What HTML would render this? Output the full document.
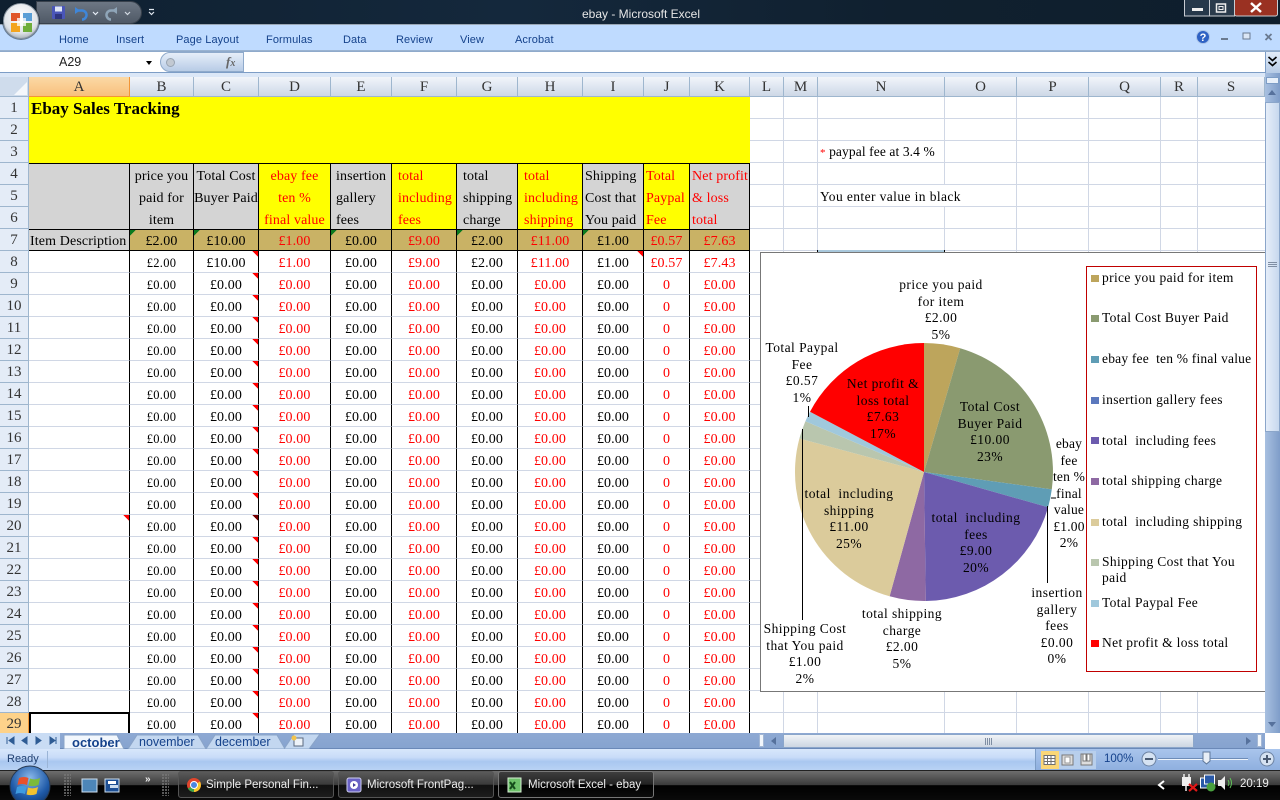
<!DOCTYPE html>
<html><head><meta charset="utf-8"><title>ebay - Microsoft Excel</title>
<style>
html,body{margin:0;padding:0;width:1280px;height:800px;overflow:hidden;background:#fff}
body{position:relative;font-family:"Liberation Serif",serif;color:#000}
.a{position:absolute}
.s{font-family:"Liberation Sans",sans-serif}
.tab{position:absolute;top:34px;font:11px "Liberation Sans",sans-serif;color:#15428b;letter-spacing:.1px;white-space:nowrap}
.ch{position:absolute;top:77px;height:19px;line-height:21px;text-align:center;font-size:15px;color:#333;background:linear-gradient(#f2f5fa,#dde5f0 55%,#ced8e6);border-right:1px solid #9eb6ce;border-bottom:1px solid #9eb6ce;box-sizing:content-box}
.rh{position:absolute;left:0;width:28px;height:21px;line-height:23px;text-align:center;font-size:15px;color:#333;background:#e4ecf7;border-right:1px solid #9eb6ce;border-bottom:1px solid #9eb6ce}
#g{position:absolute;left:29px;top:97px;width:721px;height:636px;overflow:hidden}
table{border-collapse:separate;border-spacing:0;table-layout:fixed;width:721px;font-size:14px;letter-spacing:.12px}
td{height:22px;box-sizing:border-box;padding:4px 0 0;text-align:center;border-right:1px solid #000;border-bottom:1px solid #d0d7e5;white-space:nowrap;overflow:visible;line-height:17px;background-color:#fff}
tr.y td{background:#ff0;border:0;padding:0}
td.l{text-align:left}
td.gy{background:#d4d4d4;border-bottom:0}
td.yl{background:#ff0;border-bottom:0;color:#f00}
td.r{color:#f00}
tr.top td{border-top:1px solid #000}
tr.s7 td{background:#c9b265;border-bottom:1px solid #000;border-top:1px solid #000;line-height:17px;padding-top:3px}
td.b{font-size:12.5px;letter-spacing:.3px}
td.t{background-image:linear-gradient(225deg,#f00 4px,transparent 4px)}
td.tk{background-image:linear-gradient(225deg,#700 4px,transparent 4px)}
tr.s7 td.gt{background-image:linear-gradient(135deg,#0a7a1f 4px,transparent 4px)}
.gv{position:absolute;top:97px;width:1px;height:636px;background:#d0d7e5}
.lb{position:absolute;text-align:center;font-size:13.5px;line-height:16.5px;letter-spacing:.45px;white-space:nowrap;transform:translateX(-50%)}
.lg{position:absolute;left:1102px;font-size:13.5px;line-height:16px;letter-spacing:.35px;white-space:nowrap}
.sq{position:absolute;left:1091px;width:8px;height:7px}
.tb{position:absolute;top:771px;height:27px;border:1px solid #555;border-radius:3px;box-sizing:border-box;background:linear-gradient(#5a5a5a,#3a3a3a 50%,#111 52%,#1c1c1c);color:#eee;font:11.5px/27px "Liberation Sans",sans-serif;white-space:nowrap;overflow:hidden}
.sh{position:absolute;top:735px;font:12.5px "Liberation Sans",sans-serif;color:#15428b;white-space:nowrap}
.dots{position:absolute;top:774px;width:7px;height:22px;background:radial-gradient(circle at 1px 1px,#777 1px,transparent 1px) 0 0/3px 3px}
</style></head><body>

<!-- Title bar -->
<div class="a" style="left:0;top:0;width:1280px;height:25px;background:linear-gradient(90deg,#0f2030,#14283c 40%,#10202f 70%,#0e1e2c);border-bottom:1px solid #9aa7b5;box-sizing:border-box"></div>
<div class="a" style="left:36px;top:1px;width:106px;height:23px;border-radius:0 12px 12px 0;background:linear-gradient(#6d7784,#4f5966);border:1px solid #38414c;box-sizing:border-box"></div>
<div class="a s" style="left:541px;width:200px;top:7px;text-align:center;font-size:12px;color:#e6e6e6;white-space:nowrap">ebay - Microsoft Excel</div>
<svg class="a" style="left:1184px;top:0" width="96" height="17" viewBox="0 0 96 17">
<rect x=".5" y="-2" width="25" height="18" fill="#26384a" stroke="#c8ccd2"/><rect x="25.500" y="-2" width="25" height="18" fill="#2a3b4c" stroke="#c8ccd2"/><rect x="50.500" y="-2" width="43" height="18" rx="2" fill="#9a3122" stroke="#c8ccd2"/>
<rect x="8" y="8" width="11" height="3" fill="#eee"/><rect x="32.500" y="4" width="9" height="8" fill="none" stroke="#eee" stroke-width="1.500"/><rect x="35" y="6.500" width="4" height="3" fill="none" stroke="#eee"/>
<path d="M67 3l10 9M77 3l-10 9" stroke="#fff" stroke-width="2.500"/>
</svg>

<!-- Ribbon -->
<div class="a" style="left:0;top:25px;width:1280px;height:26px;background:#bfdbff;border-bottom:1px solid #9ab3d1;box-sizing:border-box"></div>
<div class="tab" style="left:59px">Home</div><div class="tab" style="left:116px">Insert</div><div class="tab" style="left:176px">Page Layout</div><div class="tab" style="left:266px">Formulas</div><div class="tab" style="left:343px">Data</div><div class="tab" style="left:396px">Review</div><div class="tab" style="left:460px">View</div><div class="tab" style="left:515px">Acrobat</div>
<svg class="a" style="left:1190px;top:28px" width="90" height="20" viewBox="0 0 90 20">
<circle cx="13" cy="9" r="6.500" fill="#2f62c4" stroke="#a9c3e8"/><text x="13" y="13" text-anchor="middle" font-family="Liberation Sans" font-size="11" font-weight="bold" fill="#fff">?</text>
<rect x="31" y="10" width="7" height="2" fill="#6a7a90"/>
<rect x="53" y="5" width="7" height="6" fill="#dbe6f5" stroke="#6a7a90"/>
<path d="M75.500 6l6 6M81.500 6l-6 6" stroke="#6a7a90" stroke-width="1.800"/>
</svg>

<!-- Formula bar -->
<div class="a" style="left:0;top:51px;width:1280px;height:26px;background:#dbe7f7;border-top:1px solid #8faacb;box-sizing:border-box"></div>
<div class="a" style="left:0;top:52px;width:1265px;height:20px;background:#fff;border-bottom:1px solid #7d9dc6"></div>
<div class="a s" style="left:59px;top:55px;font-size:12.500px;color:#222">A29</div>
<div class="a" style="left:146px;top:61px;width:0;height:0;border:3.500px solid transparent;border-top:4px solid #000"></div>
<div class="a" style="left:160px;top:52px;width:84px;height:20px;border-radius:10px 0 0 10px;background:linear-gradient(#e6eef9,#b8cce6);border:1px solid #8faacb;box-sizing:border-box"></div>
<div class="a" style="left:166px;top:58px;width:7px;height:7px;border-radius:50%;background:#c2c9d2;border:1px solid #98a4b2"></div>
<div class="a" style="left:226px;top:54px;font:italic bold 13px 'Liberation Serif',serif;color:#666">f<span style="font-size:10px">x</span></div>
<div class="a" style="left:1265px;top:52px;width:15px;height:21px;background:linear-gradient(#e3edf9,#b6cbe6);border-left:1px solid #7d9dc6;box-sizing:border-box"></div>
<svg class="a" style="left:1267px;top:56px" width="11" height="12" viewBox="0 0 11 12"><path d="M1.500 1l4 3.500 4-3.500M1.500 6l4 3.500 4-3.500" fill="none" stroke="#000" stroke-width="1.600"/></svg>

<!-- Office orb + quick access icons -->
<svg class="a" style="left:0;top:0" width="160" height="46" viewBox="0 0 160 46">
<defs><radialGradient id="o" cx=".5" cy=".35" r=".7"><stop offset="0" stop-color="#fff"/><stop offset=".7" stop-color="#dfe3e8"/><stop offset="1" stop-color="#9aa4ae"/></radialGradient></defs>
<circle cx="21" cy="21" r="19" fill="#0c1a28" opacity=".5"/>
<circle cx="21" cy="21" r="17.500" fill="url(#o)" stroke="#8894a0"/>
<path d="M11 13h9v8h-9z" fill="#e0562a"/><path d="M23 13h9v8h-9z" fill="#3f8fd0" opacity=".85"/><path d="M11 23h9v9h-9z" fill="#f3a41f"/><path d="M23 23h9v9h-9z" fill="#6fae3a"/><path d="M17 18h9v8h-9z" fill="#fff" opacity=".75"/>
<rect x="52" y="6" width="13" height="13" rx="1" fill="#4a56b8"/><rect x="55" y="6.500" width="7" height="5" fill="#dfe6f5"/><rect x="55" y="14" width="7" height="5" fill="#2e357e"/>
<path d="M76 10.500h6a4.500 4.500 0 0 1 0 9" fill="none" stroke="#3f86d8" stroke-width="2.500"/><path d="M75 7v7l5-3.500z" fill="#3f86d8"/>
<path d="M93 12l2.500 2.500 2.500-2.500" fill="none" stroke="#e6edf6" stroke-width="1.200"/>
<path d="M116 10.500h-5a4.500 4.500 0 0 0 0 9" fill="none" stroke="#8fa5b8" stroke-width="2.500"/><path d="M117 7v7l-5-3.500z" fill="#8fa5b8"/>
<path d="M125 12l2.500 2.500 2.500-2.500" fill="none" stroke="#d4dbe3" stroke-width="1.200"/>
<path d="M149 9.500h5M149 12l2.500 2.500 2.500-2.500" fill="none" stroke="#dfe6ef" stroke-width="1.200"/>
</svg>

<!-- Corner + column headers -->
<div class="a" style="left:0;top:77px;width:28px;height:19px;background:#cfdcec;border-right:1px solid #9eb6ce;border-bottom:1px solid #9eb6ce"></div>
<div class="a" style="left:14px;top:82px;width:0;height:0;border-left:13px solid transparent;border-bottom:13px solid #f4f7fb"></div>
<div class="ch" style="left:29px;width:100px;background:linear-gradient(#fbd9a5,#f8c07d);border-color:#f29536">A</div>
<div class="ch" style="left:130px;width:63px">B</div><div class="ch" style="left:194px;width:64px">C</div><div class="ch" style="left:259px;width:71px">D</div><div class="ch" style="left:331px;width:60px">E</div><div class="ch" style="left:392px;width:64px">F</div><div class="ch" style="left:457px;width:60px">G</div><div class="ch" style="left:518px;width:64px">H</div><div class="ch" style="left:583px;width:60px">I</div><div class="ch" style="left:644px;width:45px">J</div><div class="ch" style="left:690px;width:59px">K</div><div class="ch" style="left:750px;width:33px">L</div><div class="ch" style="left:784px;width:33px">M</div><div class="ch" style="left:818px;width:126px">N</div><div class="ch" style="left:945px;width:71px">O</div><div class="ch" style="left:1017px;width:71px">P</div><div class="ch" style="left:1089px;width:71px">Q</div><div class="ch" style="left:1161px;width:36px">R</div><div class="ch" style="left:1198px;width:66px">S</div>

<!-- Row headers -->
<div class="rh" style="top:97px">1</div><div class="rh" style="top:119px">2</div><div class="rh" style="top:141px">3</div><div class="rh" style="top:163px">4</div><div class="rh" style="top:185px">5</div><div class="rh" style="top:207px">6</div><div class="rh" style="top:229px">7</div><div class="rh" style="top:251px">8</div><div class="rh" style="top:273px">9</div><div class="rh" style="top:295px">10</div><div class="rh" style="top:317px">11</div><div class="rh" style="top:339px">12</div><div class="rh" style="top:361px">13</div><div class="rh" style="top:383px">14</div><div class="rh" style="top:405px">15</div><div class="rh" style="top:427px">16</div><div class="rh" style="top:449px">17</div><div class="rh" style="top:471px">18</div><div class="rh" style="top:493px">19</div><div class="rh" style="top:515px">20</div><div class="rh" style="top:537px">21</div><div class="rh" style="top:559px">22</div><div class="rh" style="top:581px">23</div><div class="rh" style="top:603px">24</div><div class="rh" style="top:625px">25</div><div class="rh" style="top:647px">26</div><div class="rh" style="top:669px">27</div><div class="rh" style="top:691px">28</div><div class="rh" style="top:713px;height:20px;background:#fdd28a;border-color:#f29536">29</div>

<!-- Right-side grid -->
<div class="a" style="left:750px;top:97px;width:515px;height:636px;background:repeating-linear-gradient(#fff 0,#fff 21px,#d0d7e5 21px,#d0d7e5 22px)"></div>
<div class="gv" style="left:783px"></div><div class="gv" style="left:817px"></div><div class="gv" style="left:944px"></div><div class="gv" style="left:1016px"></div><div class="gv" style="left:1088px"></div><div class="gv" style="left:1160px"></div><div class="gv" style="left:1197px"></div>
<div class="a" style="left:818px;top:185px;width:130px;height:21px;background:#fff;border-bottom:1px solid #d0d7e5"></div>
<div class="a" style="left:820px;top:144px;font-size:13.500px;letter-spacing:.1px;white-space:nowrap"><span style="color:#f00;font-size:11px">*</span> paypal fee at 3.4 %</div>
<div class="a" style="left:820px;top:189px;font-size:13.500px;letter-spacing:.4px;white-space:nowrap">You enter value in black</div>

<!-- Sheet -->
<div id="g"><table>
<colgroup><col style="width:101px"><col style="width:64px"><col style="width:65px"><col style="width:72px"><col style="width:61px"><col style="width:65px"><col style="width:61px"><col style="width:65px"><col style="width:61px"><col style="width:46px"><col style="width:60px"></colgroup>
<tr class="y"><td colspan="11" class="l" style="font-weight:bold;font-size:17px;letter-spacing:0;padding:1px 0 0 2px;line-height:21px">Ebay Sales Tracking</td></tr>
<tr class="y"><td colspan="11"></td></tr>
<tr class="y"><td colspan="11"></td></tr>
<tr class="top"><td class="gy"></td><td class="gy">price you</td><td class="gy">Total Cost</td><td class="yl">ebay fee</td><td class="gy l" style="padding-left:5px">insertion</td><td class="yl l" style="padding-left:6px">total</td><td class="gy l" style="padding-left:6px">total</td><td class="yl l" style="padding-left:6px">total</td><td class="gy l" style="padding-left:2px">Shipping</td><td class="yl l" style="padding-left:2px">Total</td><td class="gy l r" style="padding-left:2px">Net profit</td></tr>
<tr><td class="gy"></td><td class="gy">paid for</td><td class="gy">Buyer Paid</td><td class="yl">ten %</td><td class="gy l" style="padding-left:5px">gallery</td><td class="yl l" style="padding-left:6px">including</td><td class="gy l" style="padding-left:6px">shipping</td><td class="yl l" style="padding-left:6px">including</td><td class="gy l" style="padding-left:2px">Cost that</td><td class="yl l" style="padding-left:2px">Paypal</td><td class="gy l r" style="padding-left:2px">&amp; loss</td></tr>
<tr><td class="gy"></td><td class="gy">item</td><td class="gy"></td><td class="yl">final value</td><td class="gy l" style="padding-left:5px">fees</td><td class="yl l" style="padding-left:6px">fees</td><td class="gy l" style="padding-left:6px">charge</td><td class="yl l" style="padding-left:6px">shipping</td><td class="gy l" style="padding-left:2px">You paid</td><td class="yl l" style="padding-left:2px">Fee</td><td class="gy l r" style="padding-left:2px">total</td></tr>
<tr class="s7"><td class="l" style="background:#d4d4d4;padding-left:1px;letter-spacing:.12px">Item Description</td><td class="gt">£2.00</td><td class="gt">£10.00</td><td class="r">£1.00</td><td class="gt">£0.00</td><td class="r">£9.00</td><td class="gt">£2.00</td><td class="r">£11.00</td><td class="gt">£1.00</td><td class="r">£0.57</td><td class="r">£7.63</td></tr>
<tr><td></td><td class="b">£2.00</td><td class="t">£10.00</td><td class="r">£1.00</td><td>£0.00</td><td class="r">£9.00</td><td>£2.00</td><td class="r">£11.00</td><td class="t">£1.00</td><td class="r">£0.57</td><td class="r">£7.43</td></tr>
<tr><td></td><td class="b">£0.00</td><td class="t">£0.00</td><td class="r">£0.00</td><td>£0.00</td><td class="r">£0.00</td><td>£0.00</td><td class="r">£0.00</td><td>£0.00</td><td class="r">0</td><td class="r">£0.00</td></tr>
<tr><td></td><td class="b">£0.00</td><td class="t">£0.00</td><td class="r">£0.00</td><td>£0.00</td><td class="r">£0.00</td><td>£0.00</td><td class="r">£0.00</td><td>£0.00</td><td class="r">0</td><td class="r">£0.00</td></tr>
<tr><td></td><td class="b">£0.00</td><td class="t">£0.00</td><td class="r">£0.00</td><td>£0.00</td><td class="r">£0.00</td><td>£0.00</td><td class="r">£0.00</td><td>£0.00</td><td class="r">0</td><td class="r">£0.00</td></tr>
<tr><td></td><td class="b">£0.00</td><td class="t">£0.00</td><td class="r">£0.00</td><td>£0.00</td><td class="r">£0.00</td><td>£0.00</td><td class="r">£0.00</td><td>£0.00</td><td class="r">0</td><td class="r">£0.00</td></tr>
<tr><td></td><td class="b">£0.00</td><td class="t">£0.00</td><td class="r">£0.00</td><td>£0.00</td><td class="r">£0.00</td><td>£0.00</td><td class="r">£0.00</td><td>£0.00</td><td class="r">0</td><td class="r">£0.00</td></tr>
<tr><td></td><td class="b">£0.00</td><td class="t">£0.00</td><td class="r">£0.00</td><td>£0.00</td><td class="r">£0.00</td><td>£0.00</td><td class="r">£0.00</td><td>£0.00</td><td class="r">0</td><td class="r">£0.00</td></tr>
<tr><td></td><td class="b">£0.00</td><td class="t">£0.00</td><td class="r">£0.00</td><td>£0.00</td><td class="r">£0.00</td><td>£0.00</td><td class="r">£0.00</td><td>£0.00</td><td class="r">0</td><td class="r">£0.00</td></tr>
<tr><td></td><td class="b">£0.00</td><td class="t">£0.00</td><td class="r">£0.00</td><td>£0.00</td><td class="r">£0.00</td><td>£0.00</td><td class="r">£0.00</td><td>£0.00</td><td class="r">0</td><td class="r">£0.00</td></tr>
<tr><td></td><td class="b">£0.00</td><td class="t">£0.00</td><td class="r">£0.00</td><td>£0.00</td><td class="r">£0.00</td><td>£0.00</td><td class="r">£0.00</td><td>£0.00</td><td class="r">0</td><td class="r">£0.00</td></tr>
<tr><td></td><td class="b">£0.00</td><td class="t">£0.00</td><td class="r">£0.00</td><td>£0.00</td><td class="r">£0.00</td><td>£0.00</td><td class="r">£0.00</td><td>£0.00</td><td class="r">0</td><td class="r">£0.00</td></tr>
<tr><td></td><td class="b">£0.00</td><td class="t">£0.00</td><td class="r">£0.00</td><td>£0.00</td><td class="r">£0.00</td><td>£0.00</td><td class="r">£0.00</td><td>£0.00</td><td class="r">0</td><td class="r">£0.00</td></tr>
<tr><td class="t"></td><td class="b">£0.00</td><td class="tk">£0.00</td><td class="r">£0.00</td><td>£0.00</td><td class="r">£0.00</td><td>£0.00</td><td class="r">£0.00</td><td>£0.00</td><td class="r">0</td><td class="r">£0.00</td></tr>
<tr><td></td><td class="b">£0.00</td><td class="t">£0.00</td><td class="r">£0.00</td><td>£0.00</td><td class="r">£0.00</td><td>£0.00</td><td class="r">£0.00</td><td>£0.00</td><td class="r">0</td><td class="r">£0.00</td></tr>
<tr><td></td><td class="b">£0.00</td><td class="t">£0.00</td><td class="r">£0.00</td><td>£0.00</td><td class="r">£0.00</td><td>£0.00</td><td class="r">£0.00</td><td>£0.00</td><td class="r">0</td><td class="r">£0.00</td></tr>
<tr><td></td><td class="b">£0.00</td><td class="t">£0.00</td><td class="r">£0.00</td><td>£0.00</td><td class="r">£0.00</td><td>£0.00</td><td class="r">£0.00</td><td>£0.00</td><td class="r">0</td><td class="r">£0.00</td></tr>
<tr><td></td><td class="b">£0.00</td><td class="t">£0.00</td><td class="r">£0.00</td><td>£0.00</td><td class="r">£0.00</td><td>£0.00</td><td class="r">£0.00</td><td>£0.00</td><td class="r">0</td><td class="r">£0.00</td></tr>
<tr><td></td><td class="b">£0.00</td><td class="t">£0.00</td><td class="r">£0.00</td><td>£0.00</td><td class="r">£0.00</td><td>£0.00</td><td class="r">£0.00</td><td>£0.00</td><td class="r">0</td><td class="r">£0.00</td></tr>
<tr><td></td><td class="b">£0.00</td><td class="t">£0.00</td><td class="r">£0.00</td><td>£0.00</td><td class="r">£0.00</td><td>£0.00</td><td class="r">£0.00</td><td>£0.00</td><td class="r">0</td><td class="r">£0.00</td></tr>
<tr><td></td><td class="b">£0.00</td><td class="t">£0.00</td><td class="r">£0.00</td><td>£0.00</td><td class="r">£0.00</td><td>£0.00</td><td class="r">£0.00</td><td>£0.00</td><td class="r">0</td><td class="r">£0.00</td></tr>
<tr><td></td><td class="b">£0.00</td><td class="t">£0.00</td><td class="r">£0.00</td><td>£0.00</td><td class="r">£0.00</td><td>£0.00</td><td class="r">£0.00</td><td>£0.00</td><td class="r">0</td><td class="r">£0.00</td></tr>
<tr><td></td><td class="b">£0.00</td><td class="t">£0.00</td><td class="r">£0.00</td><td>£0.00</td><td class="r">£0.00</td><td>£0.00</td><td class="r">£0.00</td><td>£0.00</td><td class="r">0</td><td class="r">£0.00</td></tr>
</table></div>
<div class="a" style="left:29px;top:712px;width:101px;height:21px;border:2px solid #000;border-bottom:0;box-sizing:border-box"></div>

<!-- Chart -->
<div class="a" style="left:760px;top:252px;width:505px;height:440px;background:#fff;border:1px solid #777;border-right:0;box-sizing:border-box"></div>
<div class="a" style="left:818px;top:250px;width:127px;height:2px;background:#a9c8dc"></div>
<div class="a" style="left:817px;top:250px;width:1px;height:2px;background:#000"></div>
<div class="a" style="left:944px;top:250px;width:1px;height:2px;background:#000"></div>
<svg class="a" style="left:760px;top:252px" width="505" height="440" viewBox="760 252 505 440">
<path d="M924 472L924 343A129 129 0 0 1 960.200 348.200Z" fill="#bda55c"/>
<path d="M924 472L960.200 348.200A129 129 0 0 1 1051.800 489.400Z" fill="#8a9a70"/>
<path d="M924 472L1051.800 489.400A129 129 0 0 1 1048.100 507.300Z" fill="#5f9db5"/>
<path d="M924 472L1048.100 507.300A129 129 0 0 1 925.800 601Z" fill="#6c5bae"/>
<path d="M924 472L925.800 601A129 129 0 0 1 889.600 596.300Z" fill="#8e69a3"/>
<path d="M924 472L889.600 596.300A129 129 0 0 1 799.400 438.500Z" fill="#dbcb9b"/>
<path d="M924 472L799.400 438.500A129 129 0 0 1 805.400 421.200Z" fill="#b9c6ae"/>
<path d="M924 472L805.400 421.200A129 129 0 0 1 810 411.700Z" fill="#a0c8dc"/>
<path d="M924 472L810 411.700A129 129 0 0 1 924 343Z" fill="#f00"/>
<path d="M802.500 429V620M808.500 406V417M1047.500 506V583M1051 498h5" stroke="#000" fill="none"/>
</svg>
<div class="lb" style="left:941px;top:277px">price you paid<br>for item<br>£2.00<br>5%</div>
<div class="lb" style="left:802px;top:340px">Total Paypal<br>Fee<br>£0.57<br>1%</div>
<div class="lb" style="left:883px;top:376px">Net profit &amp;<br>loss total<br>£7.63<br>17%</div>
<div class="lb" style="left:990px;top:399px">Total Cost<br>Buyer Paid<br>£10.00<br>23%</div>
<div class="lb" style="left:1069px;top:436px;letter-spacing:.2px">ebay<br>fee<br>ten %<br>final<br>value<br>£1.00<br>2%</div>
<div class="lb" style="left:849px;top:486px">total&nbsp; including<br>shipping<br>£11.00<br>25%</div>
<div class="lb" style="left:976px;top:510px">total&nbsp; including<br>fees<br>£9.00<br>20%</div>
<div class="lb" style="left:805px;top:621px">Shipping Cost<br>that You paid<br>£1.00<br>2%</div>
<div class="lb" style="left:902px;top:606px">total shipping<br>charge<br>£2.00<br>5%</div>
<div class="lb" style="left:1057px;top:585px">insertion<br>gallery<br>fees<br>£0.00<br>0%</div>

<div class="a" style="left:1086px;top:266px;width:171px;height:406px;border:1px solid #c00000;box-sizing:border-box"></div>
<div class="sq" style="top:275px;background:#bda55c"></div><div class="lg" style="top:270px">price you paid for item</div>
<div class="sq" style="top:315px;background:#8a9a70"></div><div class="lg" style="top:310px">Total Cost Buyer Paid</div>
<div class="sq" style="top:356px;background:#5f9db5"></div><div class="lg" style="top:351px;letter-spacing:.2px">ebay fee&nbsp; ten % final value</div>
<div class="sq" style="top:397px;background:#5b78bd"></div><div class="lg" style="top:392px">insertion gallery fees</div>
<div class="sq" style="top:437px;background:#6c5bae"></div><div class="lg" style="top:433px">total&nbsp; including fees</div>
<div class="sq" style="top:478px;background:#8e69a3"></div><div class="lg" style="top:473px">total shipping charge</div>
<div class="sq" style="top:519px;background:#dbcb9b"></div><div class="lg" style="top:514px">total&nbsp; including shipping</div>
<div class="sq" style="top:559px;background:#b9c6ae"></div><div class="lg" style="top:554px">Shipping Cost that You<br>paid</div>
<div class="sq" style="top:600px;background:#a0c8dc"></div><div class="lg" style="top:595px">Total Paypal Fee</div>
<div class="sq" style="top:640px;background:#f00"></div><div class="lg" style="top:635px">Net profit &amp; loss total</div>

<!-- V scrollbar -->
<div class="a" style="left:1265px;top:73px;width:15px;height:660px;background:linear-gradient(90deg,#a8c0e0,#7f9dc9)"></div>
<div class="a" style="left:1266px;top:77px;width:13px;height:7px;background:#e8f0fa;border:1px solid #7d9dc6;box-sizing:border-box"></div>
<div class="a" style="left:1268px;top:90px;width:0;height:0;border:4.500px solid transparent;border-top:0;border-bottom:5px solid #56719c"></div>
<div class="a" style="left:1265px;top:102px;width:15px;height:330px;background:linear-gradient(90deg,#e6eef9,#c7d8ee);border:1px solid #8ba6ca;box-sizing:border-box"></div>
<div class="a" style="left:1268px;top:262px;width:9px;height:6px;background:repeating-linear-gradient(#7f8ea3 0,#7f8ea3 1px,transparent 1px,transparent 2px)"></div>
<div class="a" style="left:1268px;top:722px;width:0;height:0;border:4.500px solid transparent;border-bottom:0;border-top:5px solid #56719c"></div>

<!-- Sheet tabs bar -->
<div class="a" style="left:0;top:733px;width:1265px;height:16px;background:linear-gradient(#8ea9d3,#86a3cf);border-bottom:1px solid #6b89b8;box-sizing:border-box"></div>
<div class="a" style="left:0;top:733px;width:60px;height:16px;background:#c9dcf4"></div>
<svg class="a" style="left:0;top:733px" width="330" height="16" viewBox="0 0 330 16">
<path d="M7 4v7M14 4l-5 3.500 5 3.500zM27 4l-5 3.500 5 3.500zM36 4l5 3.500-5 3.500zM50 4l5 3.500-5 3.500zM56 4v7" fill="#2f5c94" stroke="#2f5c94"/>
<path d="M64 16V2h53l7 14z" fill="#f2f7fd" stroke="#8aa4c8"/>
<path d="M128 16l9-14h61l8 14z" fill="#c3d7f0" stroke="#8aa4c8"/>
<path d="M206 16l9-14h62l8 14z" fill="#c3d7f0" stroke="#8aa4c8"/>
<path d="M284 16l10-15h26l-11 15z" fill="#c3d7f0" stroke="#8aa4c8"/>
<rect x="294" y="5" width="9" height="8" fill="#eef3f9" stroke="#5b6a80"/><circle cx="294" cy="5" r="2.500" fill="#f3c44c"/>
</svg>
<div class="sh" style="left:72px;font-weight:bold;font-size:13px">october</div><div class="sh" style="left:139px">november</div><div class="sh" style="left:215px">december</div>
<div class="a" style="left:759px;top:734px;width:5px;height:13px;background:#f2f6fb;border:1px solid #a3b7d4;box-sizing:border-box"></div>
<div class="a" style="left:771px;top:737px;width:0;height:0;border:4.500px solid transparent;border-left:0;border-right:5px solid #56719c"></div>
<div class="a" style="left:783px;top:734px;width:411px;height:14px;background:linear-gradient(#f0f3f7,#cdd6e2);border:1px solid #8ba6ca;box-sizing:border-box"></div>
<div class="a" style="left:985px;top:738px;width:7px;height:7px;background:repeating-linear-gradient(90deg,#7f8ea3 0,#7f8ea3 1px,transparent 1px,transparent 2px)"></div>
<div class="a" style="left:1246px;top:737px;width:0;height:0;border:4.500px solid transparent;border-right:0;border-left:5px solid #56719c"></div>
<div class="a" style="left:1257px;top:734px;width:5px;height:13px;background:#f2f6fb;border:1px solid #a3b7d4;box-sizing:border-box"></div>

<!-- Status bar -->
<div class="a" style="left:0;top:749px;width:1280px;height:21px;background:linear-gradient(#d8e7fb,#c8dcf8 40%,#a9c7f0 60%,#b9d2f4)"></div>
<div class="a s" style="left:7px;top:753px;font-size:11px;color:#1f3f70">Ready</div>
<div class="a" style="left:47px;top:751px;width:1px;height:17px;background:#9ab4d6"></div>
<div class="a" style="left:1035px;top:749px;width:245px;height:21px;background:linear-gradient(#a9c5ec,#8fb0df);border-left:1px solid #7d9dc6;box-sizing:border-box"></div>
<svg class="a" style="left:1040px;top:750px" width="240" height="20" viewBox="0 0 240 20">
<rect x="1" y="1" width="18" height="18" fill="#fbd777"/><rect x="19" y="1" width="19" height="18" fill="#b8cfec"/><rect x="38" y="1" width="18" height="18" fill="#b8cfec"/>
<path d="M4 5.500h11v9H4zM4 8.500h11M4 11.500h11M7.500 5.500v9M11 5.500v9" fill="#fff" stroke="#6f6f6f"/>
<rect x="22" y="5" width="11" height="10" fill="#ddd" stroke="#777"/><rect x="25" y="7" width="5" height="6" fill="#fff" stroke="#999"/>
<rect x="41" y="4" width="11" height="11" fill="#ddd" stroke="#777"/><rect x="43" y="4" width="3" height="7" fill="#fff" stroke="#777"/><rect x="47" y="4" width="3" height="7" fill="#fff" stroke="#777"/>
<circle cx="109" cy="9" r="7" fill="#d5e2f2" stroke="#6d83a3"/><path d="M105 9h8" stroke="#4a5a72" stroke-width="2"/>
<path d="M118 9.500h90" stroke="#eef4fb" stroke-width="1"/><path d="M118 8.500h90" stroke="#6d8cb8" stroke-width="1"/>
<path d="M163 2h7v9l-3.500 3-3.500-3z" fill="#e8eef6" stroke="#5f7899"/>
<circle cx="227" cy="9" r="7" fill="#d5e2f2" stroke="#6d83a3"/><path d="M223 9h8M227 5v8" stroke="#4a5a72" stroke-width="2"/>
</svg>
<div class="a s" style="left:1104px;top:753px;font-size:11.500px;color:#15428b">100%</div>

<!-- Taskbar -->
<div class="a" style="left:0;top:770px;width:1280px;height:30px;background:linear-gradient(#6e6e6e,#3a3a3a 48%,#000 50%,#0a0a0a);border-top:1px solid #222;box-sizing:border-box"></div>
<div class="dots" style="left:64px"></div><div class="dots" style="left:162px"></div>
<svg class="a" style="left:0;top:764px" width="130" height="36" viewBox="0 0 130 36">
<defs><radialGradient id="w" cx=".5" cy=".3" r=".8"><stop offset="0" stop-color="#8ab8ea"/><stop offset=".6" stop-color="#1f5aa8"/><stop offset="1" stop-color="#0b2c5c"/></radialGradient></defs>
<circle cx="30" cy="22" r="20" fill="url(#w)" stroke="#2a3a50"/>
<path d="M19 14q5-2 9.500 0l-1.500 7q-5-2-9.500 0z" fill="#e8512c"/><path d="M30 14.500q5 2 10-.500l-1.500 7q-5 2-10 .500z" fill="#7cbb3a"/><path d="M17 23q5-2 9.500 0L25 30q-5-2-9.500 0z" fill="#3e9be0"/><path d="M28 23.500q5 2 10-.500l-1.500 7q-5 2-10 .500z" fill="#f4c22e"/>
<rect x="82" y="15" width="15" height="13" fill="#4d86b8" stroke="#cfe0ef"/><rect x="105" y="15" width="14" height="13" fill="#1d4f94" stroke="#cfe0ef"/><rect x="108" y="17" width="8" height="3" fill="#fff"/><rect x="110" y="21" width="8" height="3" fill="#cde"/>
</svg>
<div class="a s" style="left:145px;top:774px;font-size:10px;color:#eee;font-weight:bold">»</div>
<div class="tb" style="left:178px;width:156px;padding-left:27px">Simple Personal Fin...</div>
<div class="tb" style="left:338px;width:156px;padding-left:28px">Microsoft FrontPag...</div>
<div class="tb" style="left:498px;width:156px;padding-left:29px;background:linear-gradient(#3e3e3e,#222 50%,#000 52%,#0c0c0c);border-color:#777">Microsoft Excel - ebay</div>
<svg class="a" style="left:186px;top:777px" width="16" height="16" viewBox="0 0 16 16"><circle cx="8" cy="8" r="7" fill="#e0452c"/><path d="M8 8L1.900 11.500A7 7 0 0 0 8 15z" fill="#3aa14a"/><path d="M8 8L8 15A7 7 0 0 0 14 4.500z" fill="#f6c72c"/><circle cx="8" cy="8" r="3.500" fill="#4a86e0" stroke="#fff"/></svg>
<svg class="a" style="left:346px;top:777px" width="16" height="16" viewBox="0 0 16 16"><rect x="1" y="1" width="14" height="14" rx="2" fill="#6a62c6" stroke="#cfd0f0"/><circle cx="8" cy="8" r="4" fill="#fff"/><path d="M7 6l3 2-3 2z" fill="#443c9c"/></svg>
<svg class="a" style="left:506px;top:777px" width="16" height="16" viewBox="0 0 16 16"><rect x="2" y="1" width="13" height="14" fill="#6ec26a" stroke="#d7efd5"/><path d="M4 5l5 7M9 5l-5 7" stroke="#164d1b" stroke-width="2"/></svg>
<svg class="a" style="left:1150px;top:772px" width="100" height="28" viewBox="0 0 100 28">
<path d="M14 9l-5 4 5 4" fill="none" stroke="#fff" stroke-width="2"/>
<rect x="32" y="5" width="9" height="9" fill="#eee"/><path d="M34 2v3M39 2v3M36 14v5" stroke="#eee" stroke-width="1.500"/><path d="M39 12l8 7M47 12l-8 7" stroke="#e01818" stroke-width="2.200"/>
<rect x="50.500" y="6" width="12" height="10" fill="#2a5aa8" stroke="#fff"/><rect x="54.500" y="3" width="10" height="9" fill="#2a5aa8" stroke="#fff"/><circle cx="61" cy="15" r="4.500" fill="#49a03f"/>
<path d="M68 8h3l4-4v14l-4-4h-3z" fill="#eee"/><path d="M78 8q2 3 0 6M80 6q3 5 0 10" fill="none" stroke="#62c45a"/>
</svg>
<div class="a s" style="left:1240px;top:778px;font-size:11.500px;color:#eee">20:19</div>
</body></html>
